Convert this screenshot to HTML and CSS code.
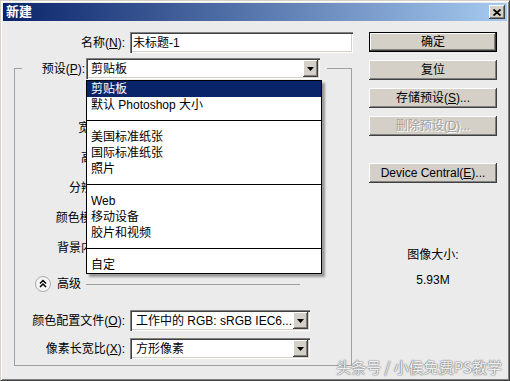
FILE: index.html
```html
<!DOCTYPE html>
<html lang="zh">

<head>
  <meta charset="UTF-8">
  <meta name="viewport" content="width=device-width, initial-scale=1.0">
  <title>新建</title>
  <link rel="stylesheet" href="styles.css">
</head>

<body>

  <div class="window">
    <div class="titlebar">
      <span class="title">新建</span>
      <span class="close-btn">
        <svg width="8" height="7" viewBox="0 0 8 7"><path d="M0.5 0.5L7.5 6.5M7.5 0.5L0.5 6.5" stroke="#000" stroke-width="1.8" fill="none"/></svg>
      </span>
    </div>

    <div class="dialog">
      <div class="main">
        <div class="field name-row">
          <label class="label">名称(<u>N</u>):</label>
          <div class="textbox">未标题-1</div>
        </div>

        <fieldset class="group">
          <legend class="preset">
            <label class="label preset-label">预设(<u>P</u>):</label>
            <div class="select preset-select">
              <span>剪贴板</span>
              <span class="arrow"><svg width="7" height="4" viewBox="0 0 7 4"><path d="M0 0h7L3.5 4z"/></svg></span>

              <!-- 展开的预设列表 -->
              <ul class="dropdown">
                <li class="active">剪贴板</li>
                <li>默认 Photoshop 大小</li>
                <li class="sep"></li>
                <li>美国标准纸张</li>
                <li>国际标准纸张</li>
                <li>照片</li>
                <li class="sep"></li>
                <li>Web</li>
                <li>移动设备</li>
                <li>胶片和视频</li>
                <li class="sep"></li>
                <li>自定</li>
              </ul>
            </div>
          </legend>

          <div class="field">
            <label class="label">大小(<u>I</u>):</label>
            <div class="select"></div>
          </div>
          <div class="field">
            <label class="label">宽度(<u>W</u>):</label>
            <div class="textbox short"></div>
          </div>
          <div class="field">
            <label class="label">高度(<u>H</u>):</label>
            <div class="textbox short"></div>
          </div>
          <div class="field">
            <label class="label">分辨率(<u>R</u>):</label>
            <div class="textbox short"></div>
          </div>
          <div class="field">
            <label class="label">颜色模式(<u>M</u>):</label>
            <div class="select short"></div>
          </div>
          <div class="field">
            <label class="label">背景内容(<u>C</u>):</label>
            <div class="select"></div>
          </div>

          <div class="advanced">
            <svg width="16" height="16" viewBox="0 0 16 16">
              <circle cx="8" cy="8" r="7.5" fill="#f6f6f6" stroke="#a9a9a9"/>
              <path d="M5 7.5l3-3 3 3M5 11l3-3 3 3" fill="none" stroke="#000" stroke-width="1.5"/>
            </svg>
            <span class="advanced-text">高级</span>
            <span class="rule"></span>
          </div>

          <div class="field compact first">
            <label class="label">颜色配置文件(<u>O</u>):</label>
            <div class="select">
              <span>工作中的 RGB: sRGB IEC6...</span>
              <span class="arrow"><svg width="7" height="4" viewBox="0 0 7 4"><path d="M0 0h7L3.5 4z"/></svg></span>
            </div>
          </div>
          <div class="field compact">
            <label class="label">像素长宽比(<u>X</u>):</label>
            <div class="select">
              <span>方形像素</span>
              <span class="arrow"><svg width="7" height="4" viewBox="0 0 7 4"><path d="M0 0h7L3.5 4z"/></svg></span>
            </div>
          </div>
        </fieldset>
      </div>

      <div class="side">
        <button class="btn default">确定</button>
        <button class="btn">复位</button>
        <button class="btn">存储预设(<u>S</u>)...</button>
        <button class="btn" disabled>删除预设(<u>D</u>)...</button>
        <button class="btn device">Device Central(<u>E</u>)...</button>

        <div class="size-title">图像大小:</div>
        <div class="size-value">5.93M</div>
      </div>
    </div>

    <div class="watermark">头条号 / 小侯免费PS教学</div>
  </div>

</body>

</html>
```

FILE: styles.css
```css
* {
  box-sizing: border-box;
}

body {
  margin: 0;
  background-color: #ebebeb;
  color: #000;
  font-family: "Liberation Sans", "Noto Sans CJK SC", sans-serif;
  font-size: 12px;
  line-height: 16px;
}

u {
  text-decoration: underline;
  text-underline-offset: 1px;
}

.window {
  position: relative;
  width: 510px;
  height: 381px;
  padding: 2px;
  border: 1px solid;
  border-color: #d4d0c8 #404040 #404040 #d4d0c8;
  box-shadow: inset 1px 1px #fff, inset -1px -1px #808080;
  background-color: #ebebeb;
  overflow: hidden;
}

/* 标题栏 */
.titlebar {
  display: flex;
  justify-content: space-between;
  align-items: center;
  height: 18px;
  padding: 0 2px 0 3px;
  background: linear-gradient(to right, #0a246a, #a6caf0);
}

.title {
  color: #fff;
  font-weight: bold;
  font-size: 13px;
}

.close-btn {
  display: flex;
  justify-content: center;
  align-items: center;
  width: 16px;
  height: 14px;
  background-color: #d4d0c8;
  box-shadow: inset -1px -1px #404040, inset 1px 1px #fff, inset -2px -2px #808080;
}

.dialog {
  display: flex;
  padding-top: 11px;
}

.main {
  width: 350px;
  padding-left: 11px;
}

.field {
  display: flex;
  align-items: center;
  height: 30px;
}

.label {
  flex: 0 0 110px;
  text-align: right;
  white-space: nowrap;
  margin-right: 5px;
}

.name-row {
  height: 21px;
}

.name-row .label {
  flex-basis: 111px;
}

.textbox,
.select {
  position: relative;
  display: flex;
  align-items: center;
  width: 180px;
  height: 21px;
  padding-left: 4px;
  background-color: #fff;
  box-shadow: inset 1px 1px #808080, inset 2px 2px #404040, inset -1px -1px #fff, inset -2px -2px #d4d0c8;
  white-space: nowrap;
}

.name-row .textbox {
  width: 223px;
  padding-left: 3px;
}

.short {
  width: 100px;
}

.arrow {
  display: flex;
  justify-content: center;
  align-items: center;
  width: 15px;
  height: 17px;
  margin-left: auto;
  margin-right: 2px;
  background-color: #d4d0c8;
  box-shadow: inset -1px -1px #404040, inset 1px 1px #fff, inset -2px -2px #808080;
}

/* 分组框 */
.group {
  width: 338px;
  margin: 5px 0 0;
  padding: 4px 0 6px;
  border: 1px solid #a0a0a0;
  min-width: 0;
}

.preset {
  display: flex;
  align-items: center;
  margin-left: 7px;
  padding: 0 7px 0 0;
}

.preset-label {
  flex-basis: 63px;
  margin-right: 1px;
}

.preset-select {
  width: 234px;
  padding-left: 5px;
}

.dropdown {
  position: absolute;
  top: 22px;
  left: 0;
  z-index: 5;
  width: 236px;
  height: 194px;
  margin: 0;
  padding: 0;
  list-style: none;
  border: 1px solid #000;
  background-color: #fff;
  box-shadow: 3px 3px 2px rgba(0, 0, 0, 0.35);
  overflow: hidden;
}

.dropdown li {
  height: 16px;
  line-height: 16px;
  padding-left: 4px;
}

.dropdown li.active {
  background-color: #0a246a;
  color: #fff;
}

.dropdown li.sep {
  position: relative;
}

.dropdown li.sep::before {
  content: "";
  position: absolute;
  left: 0;
  right: 0;
  top: 7px;
  height: 1px;
  background-color: #000;
}

/* 高级 */
.advanced {
  display: flex;
  align-items: center;
  height: 16px;
  margin-top: 13px;
  padding-left: 20px;
}

.advanced-text {
  margin-left: 6px;
}

.rule {
  flex: 1;
  height: 1px;
  margin: 0 51px 0 5px;
  background-color: #a0a0a0;
}

.compact {
  height: 21px;
  margin-top: 7px;
}

.compact.first {
  margin-top: 18px;
}

.compact .select {
  padding-left: 6px;
}

/* 右侧按钮 */
.side {
  display: flex;
  flex-direction: column;
  width: 128px;
  margin-left: 16px;
}

.btn {
  height: 20px;
  margin: 0 0 8px;
  padding: 0;
  border: 0;
  background-color: #d4d0c8;
  color: #000;
  font: inherit;
  box-shadow: inset -1px -1px #404040, inset 1px 1px #fff, inset -2px -2px #808080;
}

.btn.default {
  border: 1px solid #000;
}

.btn:disabled {
  color: #a0a0a0;
  text-shadow: 1px 1px #fff;
}

.btn.device {
  margin-top: 19px;
}

.size-title {
  margin-top: 56px;
  text-align: center;
}

.size-value {
  margin-top: 9px;
  text-align: center;
}

.watermark {
  position: absolute;
  right: 7px;
  bottom: 4px;
  font-family: "Noto Sans CJK SC", sans-serif;
  font-size: 15px;
  line-height: 18px;
  color: rgba(255, 255, 255, 0.9);
  text-shadow: 0 0 1px #777, 0 0 1px #777, 0 0 2px #999;
}
```
